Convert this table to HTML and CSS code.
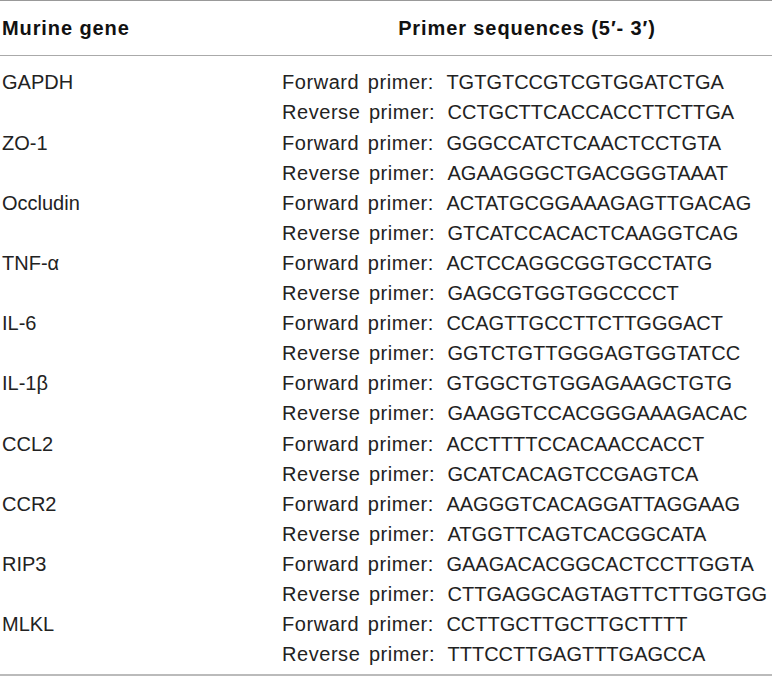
FILE: index.html
```html
<!DOCTYPE html>
<html>
<head>
<meta charset="utf-8">
<link rel="stylesheet" href="styles.css">
</head>
<body>
<table class="primers">
  <thead>
    <tr><th class="gene-col">Murine gene</th><th class="seq-col">Primer sequences (5′- 3′)</th></tr>
  </thead>
  <tbody>
    <tr class="first"><td>GAPDH</td><td><span class="lbl">Forward primer:</span><span class="seq">TGTGTCCGTCGTGGATCTGA</span></td></tr>
    <tr><td></td><td><span class="lbl">Reverse primer:</span><span class="seq">CCTGCTTCACCACCTTCTTGA</span></td></tr>
    <tr><td>ZO-1</td><td><span class="lbl">Forward primer:</span><span class="seq">GGGCCATCTCAACTCCTGTA</span></td></tr>
    <tr><td></td><td><span class="lbl">Reverse primer:</span><span class="seq">AGAAGGGCTGACGGGTAAAT</span></td></tr>
    <tr><td>Occludin</td><td><span class="lbl">Forward primer:</span><span class="seq">ACTATGCGGAAAGAGTTGACAG</span></td></tr>
    <tr><td></td><td><span class="lbl">Reverse primer:</span><span class="seq">GTCATCCACACTCAAGGTCAG</span></td></tr>
    <tr><td>TNF-α</td><td><span class="lbl">Forward primer:</span><span class="seq">ACTCCAGGCGGTGCCTATG</span></td></tr>
    <tr><td></td><td><span class="lbl">Reverse primer:</span><span class="seq">GAGCGTGGTGGCCCCT</span></td></tr>
    <tr><td>IL-6</td><td><span class="lbl">Forward primer:</span><span class="seq">CCAGTTGCCTTCTTGGGACT</span></td></tr>
    <tr><td></td><td><span class="lbl">Reverse primer:</span><span class="seq">GGTCTGTTGGGAGTGGTATCC</span></td></tr>
    <tr><td>IL-1β</td><td><span class="lbl">Forward primer:</span><span class="seq">GTGGCTGTGGAGAAGCTGTG</span></td></tr>
    <tr><td></td><td><span class="lbl">Reverse primer:</span><span class="seq">GAAGGTCCACGGGAAAGACAC</span></td></tr>
    <tr><td>CCL2</td><td><span class="lbl">Forward primer:</span><span class="seq">ACCTTTTCCACAACCACCT</span></td></tr>
    <tr><td></td><td><span class="lbl">Reverse primer:</span><span class="seq">GCATCACAGTCCGAGTCA</span></td></tr>
    <tr><td>CCR2</td><td><span class="lbl">Forward primer:</span><span class="seq">AAGGGTCACAGGATTAGGAAG</span></td></tr>
    <tr><td></td><td><span class="lbl">Reverse primer:</span><span class="seq">ATGGTTCAGTCACGGCATA</span></td></tr>
    <tr><td>RIP3</td><td><span class="lbl">Forward primer:</span><span class="seq">GAAGACACGGCACTCCTTGGTA</span></td></tr>
    <tr><td></td><td><span class="lbl">Reverse primer:</span><span class="seq">CTTGAGGCAGTAGTTCTTGGTGG</span></td></tr>
    <tr><td>MLKL</td><td><span class="lbl">Forward primer:</span><span class="seq">CCTTGCTTGCTTGCTTTT</span></td></tr>
    <tr class="last"><td></td><td><span class="lbl">Reverse primer:</span><span class="seq">TTTCCTTGAGTTTGAGCCA</span></td></tr>
  </tbody>
</table>
</body>
</html>
```
FILE: styles.css
```css
html, body {
  margin: 0;
  padding: 0;
  background: #fff;
}
.primers {
  width: 772px;
  border-collapse: collapse;
  font-family: "Liberation Sans", Arial, sans-serif;
  font-size: 20px;
  color: #222;
  border-top: 1px solid #999;
  border-bottom: 2px solid #bbb;
}
.primers th {
  font-weight: bold;
  font-size: 20px;
  letter-spacing: 0.9px;
  color: #111;
  height: 54px;
  padding: 0;
  border-bottom: 1px solid #aaa;
}
.gene-col {
  width: 280px;
  text-align: left;
  padding-left: 2px !important;
}
.seq-col {
  text-align: center;
}
.primers td {
  padding: 0;
  height: 30.1px;
  line-height: 30.1px;
  white-space: nowrap;
}
.primers td:first-child {
  padding-left: 2px;
}
.primers tr.first td {
  padding-top: 11.4px;
}
.primers tr.last td {
  padding-bottom: 5px;
}
.lbl {
  letter-spacing: 0.55px;
  word-spacing: 2.5px;
}
.seq {
  margin-left: 12.5px;
}
```
